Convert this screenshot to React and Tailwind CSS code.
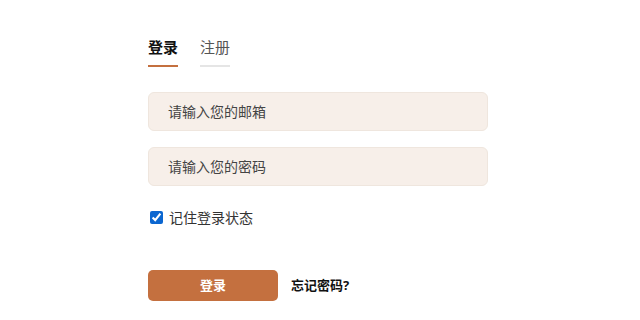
export default function App() {
  return (
    <div
      className="w-[640px] h-[320px] bg-white flex justify-start"
      style={{ fontFamily: '"Noto Sans", "Noto Sans CJK SC", sans-serif' }}
    >
      <div className="ml-[148px] w-[340px] pt-[36px]">
        {/* tabs */}
        <div className="flex gap-[22px]">
          <div className="flex flex-col items-center">
            <span className="text-[15px] leading-[22px] font-bold text-[#111]">登录</span>
            <span className="mt-[7px] h-[2px] w-[30px] bg-[#c4703f]" />
          </div>
          <div className="flex flex-col items-center">
            <span className="text-[15px] leading-[22px] text-[#555]">注册</span>
            <span className="mt-[7px] h-[2px] w-[30px] bg-[#e5e5e5]" />
          </div>
        </div>

        <div className="mt-[25px] flex flex-col gap-[16px]">
          <input
            placeholder="请输入您的邮箱"
            className="h-[39px] w-full rounded-[6px] border border-[#efe6de] bg-[#f7efe9] px-[19px] text-[14px] placeholder:text-[#444] outline-none"
          />
          <input
            placeholder="请输入您的密码"
            type="password"
            className="h-[39px] w-full rounded-[6px] border border-[#efe6de] bg-[#f7efe9] px-[19px] text-[14px] placeholder:text-[#444] outline-none"
          />
        </div>

        <label className="mt-[21px] flex items-center gap-[6px] text-[14px] text-[#333]">
          <input type="checkbox" defaultChecked className="ml-[2px] w-[13px] h-[13px] accent-[#0b66d0]" />
          记住登录状态
        </label>

        <div className="mt-[42px] flex items-center gap-[13px]">
          <button className="h-[31px] w-[130px] rounded-[5px] bg-[#c4703f] text-white text-[13px] font-bold">
            登录
          </button>
          <span className="text-[13px] font-bold text-[#111]">忘记密码?</span>
        </div>
      </div>
    </div>
  );
}
